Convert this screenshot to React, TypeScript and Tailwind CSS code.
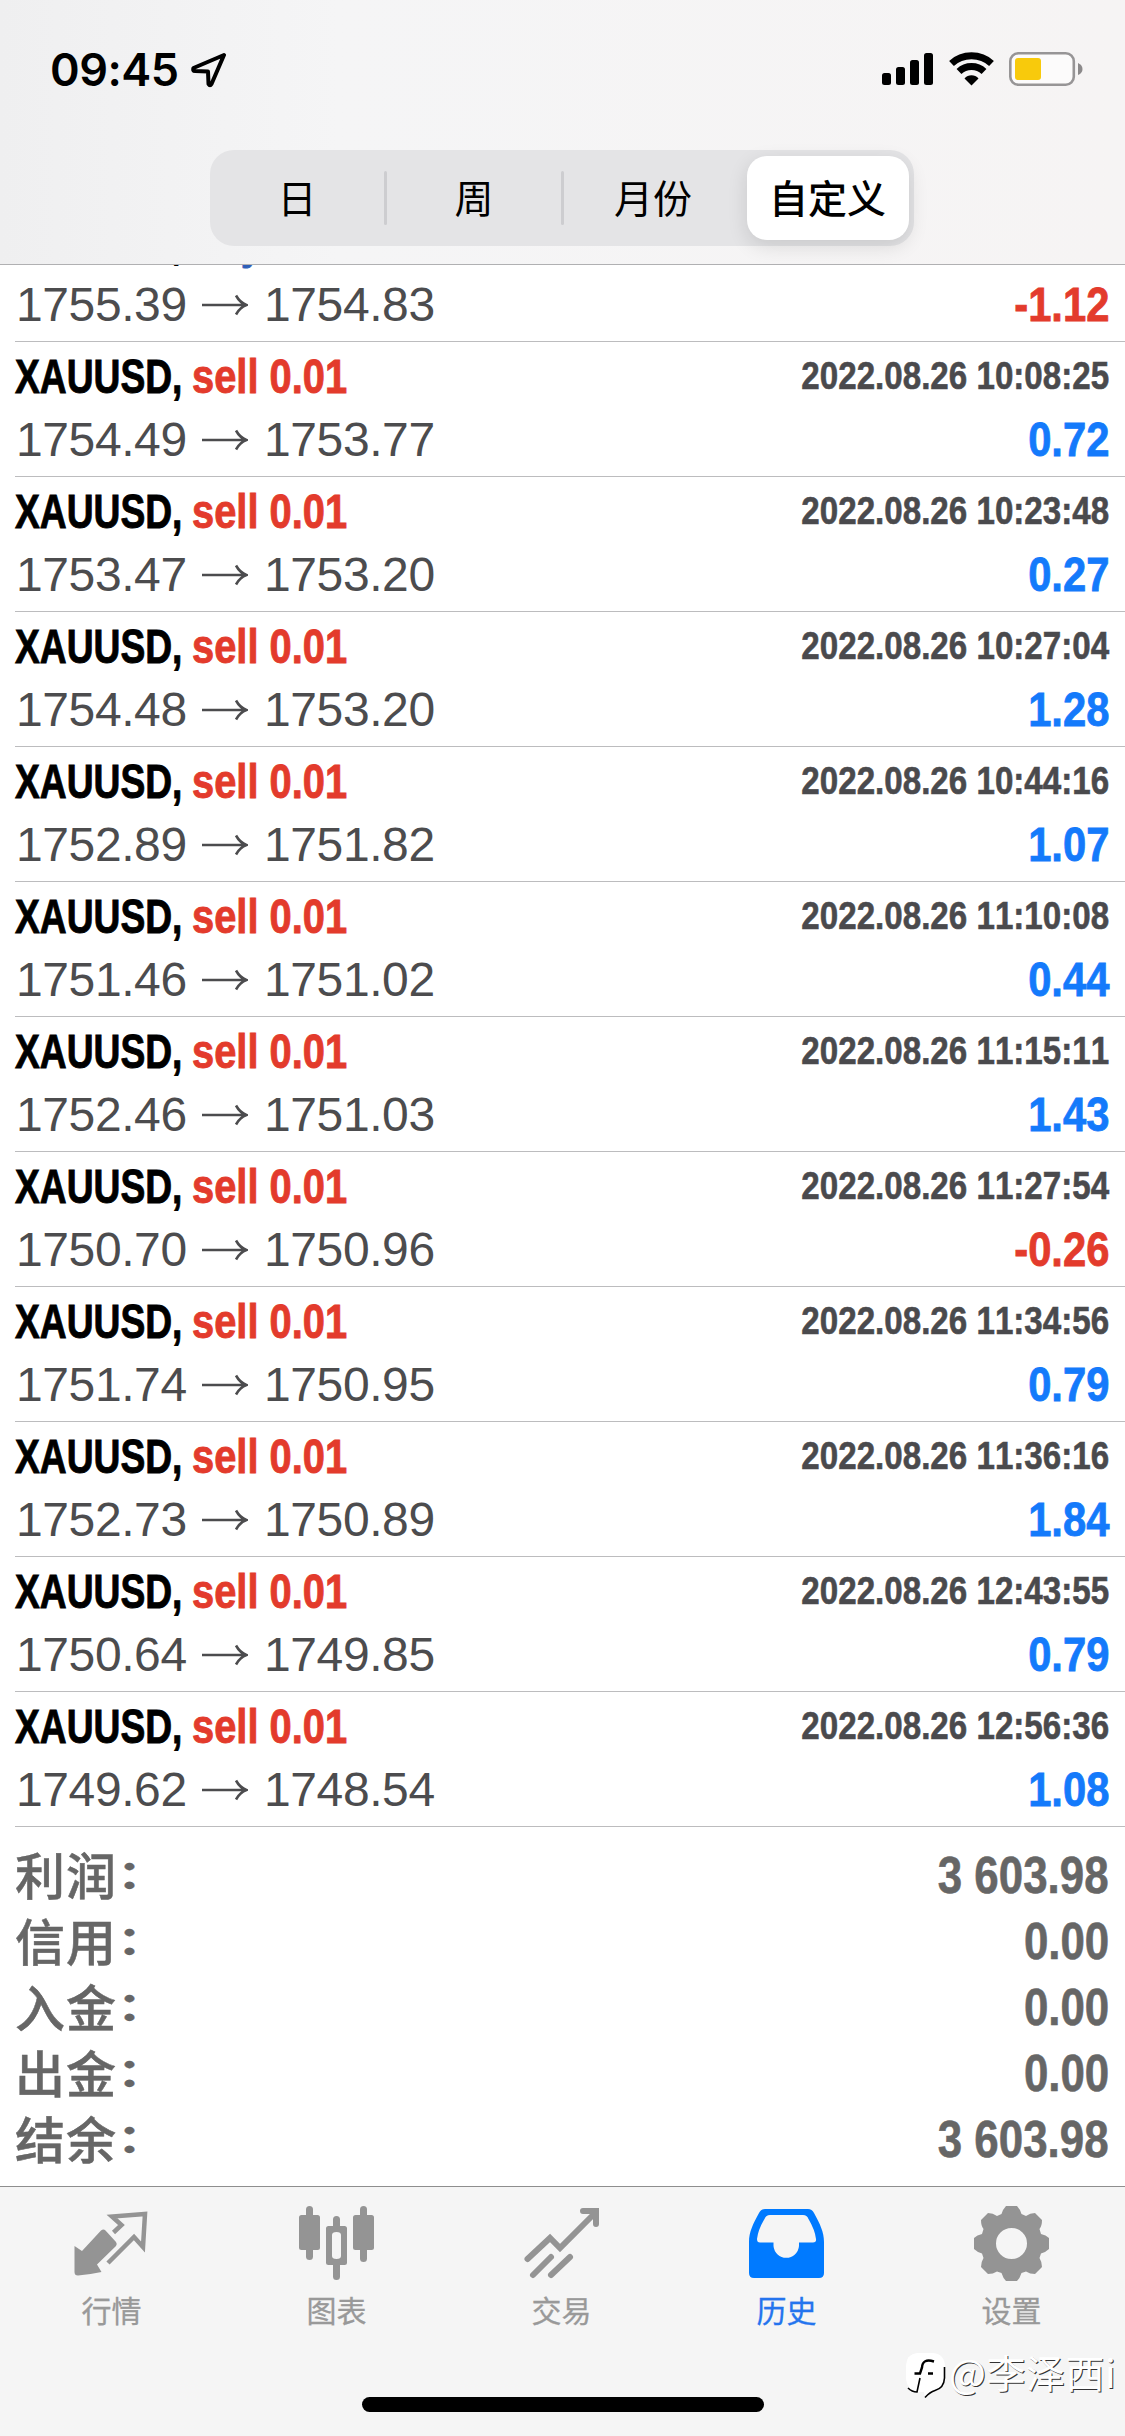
import type { ReactNode } from "react";

const font = "font-['Liberation_Sans','Noto_Sans_CJK_SC',sans-serif]";
const cjk = "font-['Noto_Sans_CJK_SC',sans-serif]";

type Deal = { side: "buy" | "sell"; open: string; close: string; time?: string; profit: string };

const deals: Deal[] = [
  { side: "buy", open: "1755.39", close: "1754.83", profit: "-1.12" },
  { side: "sell", open: "1754.49", close: "1753.77", time: "2022.08.26 10:08:25", profit: "0.72" },
  { side: "sell", open: "1753.47", close: "1753.20", time: "2022.08.26 10:23:48", profit: "0.27" },
  { side: "sell", open: "1754.48", close: "1753.20", time: "2022.08.26 10:27:04", profit: "1.28" },
  { side: "sell", open: "1752.89", close: "1751.82", time: "2022.08.26 10:44:16", profit: "1.07" },
  { side: "sell", open: "1751.46", close: "1751.02", time: "2022.08.26 11:10:08", profit: "0.44" },
  { side: "sell", open: "1752.46", close: "1751.03", time: "2022.08.26 11:15:11", profit: "1.43" },
  { side: "sell", open: "1750.70", close: "1750.96", time: "2022.08.26 11:27:54", profit: "-0.26" },
  { side: "sell", open: "1751.74", close: "1750.95", time: "2022.08.26 11:34:56", profit: "0.79" },
  { side: "sell", open: "1752.73", close: "1750.89", time: "2022.08.26 11:36:16", profit: "1.84" },
  { side: "sell", open: "1750.64", close: "1749.85", time: "2022.08.26 12:43:55", profit: "0.79" },
  { side: "sell", open: "1749.62", close: "1748.54", time: "2022.08.26 12:56:36", profit: "1.08" },
];

const totals = [
  ["利润", "3 603.98"],
  ["信用", "0.00"],
  ["入金", "0.00"],
  ["出金", "0.00"],
  ["结余", "3 603.98"],
];

function StatusBar() {
  return (
    <div className="flex h-[150px] items-start justify-between pt-[42px] pr-[42px] pl-[50px]">
      <div className="flex items-start">
        <span className="w-[141px] font-['Inter',sans-serif] text-[45px] leading-[55px] font-semibold tracking-[-0.5px]">09:45</span>
        <svg className="mt-[10px]" width="36" height="36" viewBox="0 0 36 36" fill="none" stroke="#000" strokeWidth="4" strokeLinejoin="round">
          <path d="M33 3L2.500 16Q1.500 19 4 19L17 19.500L17.500 32Q19 34.500 20.500 32Z" />
        </svg>
      </div>
      <div className="flex items-start pt-[10px]">
        <svg width="51" height="34" viewBox="0 0 51 34">
          <rect x="0" y="21" width="9" height="12" rx="2.500" />
          <rect x="14" y="15" width="9" height="18" rx="2.500" />
          <rect x="28" y="8" width="9" height="25" rx="2.500" />
          <rect x="42" y="1" width="9" height="32" rx="2.500" />
        </svg>
        <svg className="ml-[16px]" width="45" height="34" viewBox="0 0 45 34" fill="none" stroke="#000" strokeWidth="7">
          <path d="M2.500 11.500C13.500 1.200 31.500 1.200 42.500 11.500" />
          <path d="M10 19.500C17 12.800 28 12.800 35 19.500" />
          <path d="M15.500 26.500C19 22.300 26 22.300 29.500 26.500L22.500 33.500Z" fill="#000" stroke="none" />
        </svg>
        <svg className="ml-[15px]" width="74" height="34" viewBox="0 0 74 34">
          <rect x="1.300" y="1.300" width="63.500" height="31.400" rx="8" fill="#fcfbfb" stroke="#979596" strokeWidth="2.600" />
          <rect x="6" y="6" width="26" height="22" rx="3" fill="#f8ca0c" />
          <path d="M69 11Q73.500 13 73.500 17T69 23Z" fill="#8b898a" />
        </svg>
      </div>
    </div>
  );
}

function Segmented() {
  return (
    <div className={`ml-[210px] flex h-24 w-[704px] items-center rounded-[24px] bg-[#e4e4e6] text-[39px] leading-none ${cjk}`}>
      <span className="w-[174px] pb-[3px] text-center">日</span>
      <span className="h-[54px] w-[3px] rounded bg-[#cdcdd0]" />
      <span className="w-[174px] pb-[3px] text-center">周</span>
      <span className="h-[54px] w-[3px] rounded bg-[#cdcdd0]" />
      <span className="w-[183px] pr-[5px] pb-[3px] text-center">月份</span>
      <span className="flex h-[84px] w-[162px] items-center justify-center rounded-[20px] bg-white pr-px pb-[3px] font-medium shadow-[0_6px_20px_rgba(0,0,0,0.12)]">自定义</span>
    </div>
  );
}

function DealRow({ deal }: { deal: Deal }) {
  return (
    <div className="ml-[15px] h-[135px] shrink-0 border-b border-[#bcbcbe] pr-4">
      <div className="flex h-[68px] items-start justify-between pt-[8px] font-bold whitespace-nowrap">
        <div className="flex text-[48px] leading-[54px] [-webkit-text-stroke:0.9px_currentColor]">
          <span className="w-[177px]">
            <span className="inline-block origin-left scale-x-[0.775] text-black">XAUUSD,</span>
          </span>
          <span className={deal.side === "buy" ? "text-[#2e5fb8]" : "text-[#e33b2c]"}>
            <span className="inline-block origin-left scale-x-[0.830]">{deal.side} 0.01</span>
          </span>
        </div>
        {deal.time && (
          <span className="inline-block origin-right scale-x-[0.850] text-[39px] leading-[52px] text-[#4a4a4d] [font-kerning:none] [-webkit-text-stroke:0.6px_currentColor]">
            {deal.time}
          </span>
        )}
      </div>
      <div className="flex h-[66px] items-start justify-between pt-[3px] text-[48px] leading-[54px] [font-kerning:none]">
        <div className="flex items-start pl-px text-[#4c4c4e]">
          <span className="w-[186px] tracking-[-0.4px]">{deal.open}</span>
          <svg className="mt-[16px] mr-[16px]" width="46" height="22" viewBox="0 0 46 22" fill="none" stroke="currentColor" strokeWidth="2.600">
            <path d="M0 11H44M34 1.500C36.500 6 40 9.500 44.500 11C40 12.500 36.500 16 34 20.500" />
          </svg>
          <span className="tracking-[-0.4px]">{deal.close}</span>
        </div>
        <span className={`inline-block origin-right scale-x-[0.870] font-bold [-webkit-text-stroke:0.8px_currentColor] ${deal.profit.startsWith("-") ? "text-[#e33b2c]" : "text-[#147afb]"}`}>
          {deal.profit}
        </span>
      </div>
    </div>
  );
}

function Tab({ label, active, children }: { label: string; active?: boolean; children: ReactNode }) {
  return (
    <div className={`flex w-[225px] flex-col items-center pt-[19px] ${active ? "text-[#007aff]" : "text-[#949494]"}`}>
      <svg className="mr-[2px]" width="76" height="76" viewBox="0 0 76 76" fill="currentColor">{children}</svg>
      <span className={`mt-[12px] pr-[2px] text-[30px] leading-[30px] [-webkit-text-stroke:0.3px_currentColor] ${active ? "text-[#2474ee]" : "text-[#999]"} ${cjk}`}>{label}</span>
    </div>
  );
}

function TabBar() {
  return (
    <div className="relative h-[250px] shrink-0 border-t border-[#8e8e8e] bg-[#f5f5f5]">
      <div className="flex">
        <Tab label="行情">
          <path d="M31.500 24.500Q29.500 22.500 27 24.500L8 45L0.500 40V66Q0.500 69.500 4 69.500Q16 68.500 27.500 66L23 58.500L42 40Q43.500 38 42 36Z" />
          <path d="M39.500 26.500L47.500 19L38 10.500L71 8L69 41L60 31L34 57" fill="none" stroke="currentColor" strokeWidth="4.500" />
        </Tab>
        <Tab label="图表">
          <rect x="0" y="9" width="21" height="35" rx="2.500" />
          <rect x="7" y="0" width="7" height="54" rx="3.500" />
          <rect x="54" y="9" width="21" height="35" rx="2.500" />
          <rect x="61" y="0" width="7" height="56" rx="3.500" />
          <path d="M34 20V13.500a3.500 3.500 0 0 1 7 0V20H45.500Q48 20 48 22.500V56.500Q48 59 45.500 59H41V70.500a3.500 3.500 0 0 1-7 0V59H29.500Q27 59 27 56.500V22.500Q27 20 29.500 20ZM37.500 26Q33 26 33 29V50Q33 53 37.500 53T42 50V29Q42 26 37.500 26Z" fillRule="evenodd" />
        </Tab>
        <Tab label="交易">
          <g fill="none" stroke="currentColor" strokeWidth="6" strokeLinecap="round">
            <path d="M3.500 53L26 32L36 42L69 9M59 5H72V18" />
            <path d="M9 69L27 51M27 69L46 51" />
          </g>
        </Tab>
        <Tab label="历史" active>
          <path fillRule="evenodd" d="M16 3H59Q63 3 65 7C71 18 75 26 75 36V67Q75 72 70 72H5Q0 72 0 67V36C0 26 4 18 10 7Q12 3 16 3ZM21 9Q17 9 15.500 13Q9 24 8 33Q8 36.500 11 36.500H24.500V40A12.800 13 0 0 0 50 40V36.500H64Q67.500 36.500 67 33Q66 24 59.500 13Q58 9 54 9Z" />
        </Tab>
        <Tab label="设置">
          <path fillRule="evenodd" d="M32 0H43Q46 3 47.500 8L52 10Q56 7 61 7L68 14Q68 20 65.500 23L67 28Q72 29 75 32V43Q72 46 67 47.500L65.500 52Q68 56 68 61L61 68Q56 68 52 65.500L47.500 67Q46 72 43 75H32Q29 72 27.500 67L23 65.500Q19 68 14 68L7 61Q7 56 9.500 52L8 47.500Q3 46 0 43V32Q3 29 8 28L9.500 23Q7 20 7 14L14 7Q19 7 23 10L27.500 8Q29 3 32 0ZM37.500 22A15.500 15.500 0 1 0 37.500 53A15.500 15.500 0 1 0 37.500 22Z" />
        </Tab>
      </div>
      <div className="absolute bottom-[24px] left-[362px] h-[15px] w-[402px] rounded-full bg-black" />
      <div className="absolute top-[165px] left-[905px] flex items-start text-white">
        <svg width="44" height="48" viewBox="0 0 44 48">
          <path d="M12 1H28Q40 2 40 15V26Q40 37 30 39L20 46L19 40H13Q2 38 1 27V13Q2 2 12 1Z" fill="#fff" />
          <path d="M39.500 15V26Q39 36 30 38.500Q25 40 20 45.500M3 36Q7 40 12 40L15 26" fill="none" stroke="#000" strokeWidth="1.600" />
          <path d="M29 9.500Q17.500 6 17 15.500L15 21.500H9.500M23 21.500H28" fill="none" stroke="#000" strokeWidth="2.400" />
        </svg>
        <span className={`text-[39px] leading-[38px] tracking-[0.5px] [text-shadow:1px_1px_0_#333] ${cjk}`}>@李泽西i</span>
      </div>
    </div>
  );
}

export default function App() {
  return (
    <div className={`flex h-[2436px] w-[1125px] flex-col overflow-hidden bg-white text-black ${font}`}>
      <header className="h-[265px] shrink-0 border-b border-[#b0b0b2] bg-linear-to-r from-[#efeff0] via-[#f5f5f6] via-30% to-[#f6f4f4]">
        <StatusBar />
        <Segmented />
      </header>
      <main className="flex h-[1921px] shrink-0 flex-col overflow-hidden">
        <div className="-mt-[58px] flex shrink-0 flex-col">
          {deals.map((deal, i) => (
            <DealRow key={i} deal={deal} />
          ))}
        </div>
        <div className="flex flex-col pt-[16px] pr-4 pl-[15px] text-[#666]">
          {totals.map(([label, value]) => (
            <div key={label} className="flex h-[66px] items-start justify-between">
              <span className={`flex text-[50px] leading-[60px] font-medium whitespace-nowrap [-webkit-text-stroke:0.5px_currentColor] ${cjk}`}>
                <span className="w-[102px] tracking-[1px]">{label}</span>
                <span className="-mt-[2px] h-[60px] scale-y-[0.760] font-bold">：</span>
              </span>
              <span className="inline-block origin-right scale-x-[0.860] text-[51px] leading-[66px] font-bold [font-kerning:none] [-webkit-text-stroke:0.6px_currentColor]">{value}</span>
            </div>
          ))}
        </div>
      </main>
      <TabBar />
    </div>
  );
}
